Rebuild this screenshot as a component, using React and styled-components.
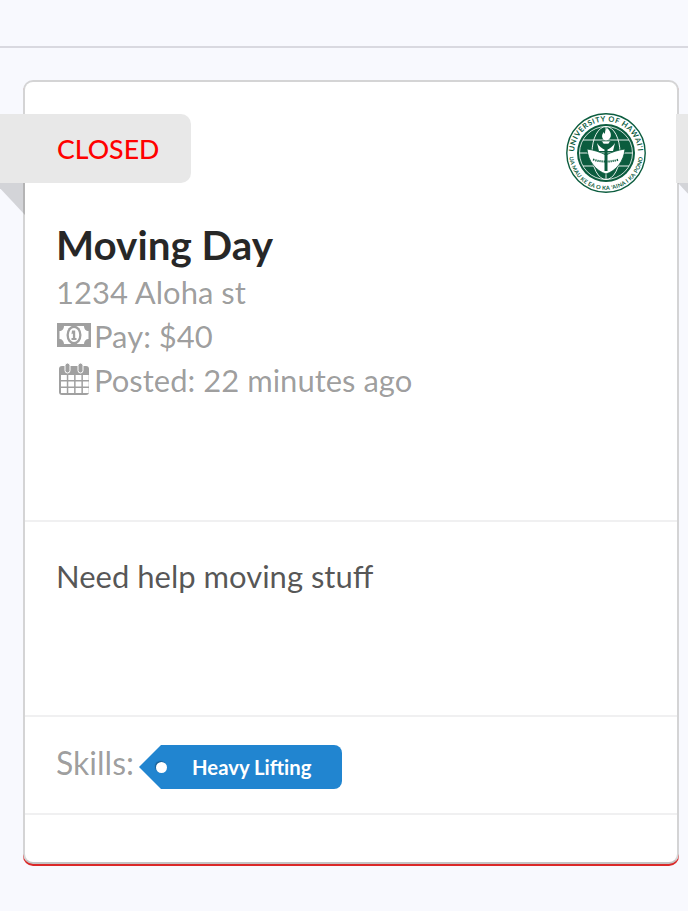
import React from "react";
import styled, { createGlobalStyle } from "styled-components";

const Global = createGlobalStyle`
  html, body { margin: 0; padding: 0; background: #f8f9fe; }
  body { font-family: Lato, "Open Sans", sans-serif; overflow: hidden; }
`;
const Page = styled.div`
  width: 688px; height: 911px; overflow: hidden; position: relative; background: #f8f9fe;
`;
const TopBar = styled.div`
  height: 46px; border-bottom: 2px solid #d9d9e0;
`;
const Main = styled.main`
  padding: 32px 9px 0 23px;
`;
const Card = styled.section`
  position: relative;
  height: 780px;
  background: #fff;
  border: 2px solid #d4d4d5;
  border-radius: 10px;
  border-bottom-color: #c4c4c4;
  box-shadow: 0 2px 0 0 #db2828;
  display: flex;
  flex-direction: column;
`;
const Section = styled.div`
  height: ${p => p.$h}px;
  flex: none;
  box-sizing: border-box;
  padding: ${p => p.$pad || "0 32px"};
  border-top: ${p => (p.$first ? "none" : "2px solid #f0f0f1")};
`;
const Ribbon = styled.div`
  position: absolute;
  top: 32px;
  left: -30px;
  width: 196px;
  height: 69px;
  box-sizing: border-box;
  background: #e8e8e8;
  border-radius: 0 10px 10px 0;
  padding-left: 62px;
  display: flex;
  align-items: center;
  color: #ff0000;
  font-size: 26.7px;
  font-weight: 500;
  &::after {
    content: "";
    position: absolute;
    left: 0; top: 100%;
    border-style: solid;
    border-width: 0 30px 32px 0;
    border-color: transparent rgba(0,0,0,.15) transparent transparent;
  }
`;
const RightRibbon = styled.div`
  position: absolute;
  top: 32px;
  left: 651px;
  width: 30px;
  height: 69px;
  background: #e8e8e8;
  &::after {
    content: "";
    position: absolute;
    left: 2px; top: 100%;
    border-style: solid;
    border-width: 0 30px 32px 0;
    border-color: transparent rgba(0,0,0,.15) transparent transparent;
  }
`;
const Logo = styled.svg`
  position: absolute;
  top: 31px;
  right: 31px;
  width: 80px;
  height: 80px;
`;
const Title = styled.h1`
  margin: 0;
  font-size: 40.4px;
  line-height: 50px;
  font-weight: 700;
  color: rgba(0,0,0,.85);
`;
const Meta = styled.div`
  display: flex;
  align-items: center;
  height: 44px;
  font-size: 31px;
  color: rgba(0,0,0,.4);
  font-weight: 400;
`;
const Description = styled.p`
  margin: 0;
  font-size: 31px;
  line-height: 44px;
  font-weight: 400;
  color: rgba(0,0,0,.68);
`;
const SkillRow = styled.div`
  display: flex;
  align-items: flex-start;
  font-size: 32px;
  line-height: 44px;
  font-weight: 400;
  color: rgba(0,0,0,.4);
`;
const Tag = styled.span`
  position: relative;
  margin: 4px 0 0 27px;
  height: 44px;
  width: 181px;
  box-sizing: border-box;
  background: #2185d0;
  border-radius: 0 8px 8px 0;
  color: #fff;
  font-size: 20.3px;
  font-weight: 700;
  display: flex;
  align-items: center;
  padding-left: 31px;
  &::before {
    content: "";
    position: absolute;
    left: -22px; top: 0;
    border-style: solid;
    border-width: 22px 22px 22px 0;
    border-color: transparent #2185d0 transparent transparent;
  }
  &::after {
    content: "";
    position: absolute;
    left: -5px; top: 17px;
    width: 11px; height: 11px;
    border-radius: 50%;
    background: #fff;
    box-shadow: -1px -1px 1px rgba(0,0,0,.3);
  }
`;
const IconWrap = styled.svg`
  width: 38px;
  height: 34px;
  flex: none;
`;

const MoneyIcon = () => (
  <IconWrap viewBox="0 1 38 34">
    <path fill="#a0a0a0" fillRule="evenodd" d="M1 5h34v24H1z M8 8c0 3-2 5-4.500 5v8c2.500 0 4.500 2 4.500 5h20c0-3 2-5 4.500-5v-8c-2.500 0-4.500-2-4.500-5z" />
    <ellipse cx="18" cy="17" rx="7.500" ry="9.500" fill="#a0a0a0" />
    <ellipse cx="18" cy="17" rx="5.200" ry="7" fill="#fff" />
    <path fill="#a0a0a0" d="M16 12.500h3.200v7.500h1.300v2h-5v-2h1.400v-4.500l-1.400.8z" />
  </IconWrap>
);
const CalendarIcon = () => (
  <IconWrap viewBox="0 1 38 34">
    <rect x="3" y="4" width="30" height="29" rx="3" fill="#a0a0a0" />
    <g fill="#fff">
      {[5, 12.3, 19.6, 26.9].map(x =>
        [13, 19.5, 26].map(y => <rect key={`${x}-${y}`} x={x} y={y} width="5.8" height="5" />)
      )}
    </g>
    <rect x="9" y="1" width="5" height="10" rx="2.500" fill="#a0a0a0" stroke="#fff" strokeWidth="1" />
    <rect x="22" y="1" width="5" height="10" rx="2.500" fill="#a0a0a0" stroke="#fff" strokeWidth="1" />
  </IconWrap>
);

const UHLogo = () => (
  <Logo viewBox="0 0 80 80">
    <defs>
      <path id="arcTop" d="M8.500 46a32 32 0 1 1 63 0" />
      <path id="arcBottom" d="M3.500 46a37 37 0 0 0 73 0" />
    </defs>
    <circle cx="40" cy="40" r="39.200" fill="#fff" stroke="#0b5c3e" strokeWidth="1.400" />
    <circle cx="40" cy="40" r="29" fill="#0b5c3e" />
    <circle cx="40" cy="40" r="26.500" fill="none" stroke="#fff" strokeWidth=".8" />
    <g fill="none" stroke="#fff" strokeWidth=".9">
      <ellipse cx="40" cy="40" rx="14" ry="26.500" />
      <path d="M13.500 40h53M17 27h46M17 53h46M40 13.500v53" />
    </g>
    <path d="M31 30c2 3 5 6 9 7 4-1 7-4 9-7l-2 8H33z" fill="#fff" />
    <path d="M21 36c7 1 13 3 19 6 6-3 12-5 19-6-1 12-9 22-19 25-10-3-18-13-19-25z" fill="#fff" stroke="#0b5c3e" strokeWidth=".8" />
    <path d="M35.500 28h9l-2 3h-5z" fill="#fff" stroke="#0b5c3e" strokeWidth=".6" />
    <path d="M41 15c5 4 5 10 1 12h-4c-3-3-2-6 0-8 0 2 1 2 1 1 0-2 1-3 2-5z" fill="#fff" />
    <path d="M38.500 31h3v27h-3z" fill="#0b5c3e" />
    <path d="M27 46.500c5 1.500 8 2 13 2s8-.5 13-2" fill="none" stroke="#0b5c3e" strokeWidth="2" strokeDasharray="1.300 .9" />
    <text fontFamily="Lato, sans-serif" fontSize="7.400" fontWeight="700" fill="#0b5c3e" letterSpacing=".55">
      <textPath href="#arcTop" startOffset="50%" textAnchor="middle">UNIVERSITY OF HAWAI‘I</textPath>
    </text>
    <text fontFamily="Lato, sans-serif" fontSize="5.600" fontWeight="700" fill="#0b5c3e" letterSpacing=".25">
      <textPath href="#arcBottom" startOffset="50%" textAnchor="middle">UA MAU KE EA O KA ‘AINA I KA PONO</textPath>
    </text>
  </Logo>
);

export default function App() {
  return (
    <Page>
      <Global />
      <TopBar />
      <Main>
        <Card>
          <Ribbon>CLOSED</Ribbon>
          <RightRibbon />
          <UHLogo />
          <Section $first $h={438} $pad="138px 31px 0">
            <Title>Moving Day</Title>
            <Meta>1234 Aloha st</Meta>
            <Meta><MoneyIcon />Pay: $40</Meta>
            <Meta><CalendarIcon />Posted: 22 minutes ago</Meta>
          </Section>
          <Section $h={195} $pad="32px 31px 0">
            <Description>Need help moving stuff</Description>
          </Section>
          <Section $h={98} $pad="24px 31px 0">
            <SkillRow>Skills:<Tag>Heavy Lifting</Tag></SkillRow>
          </Section>
          <Section $h={49} />
        </Card>
      </Main>
    </Page>
  );
}
